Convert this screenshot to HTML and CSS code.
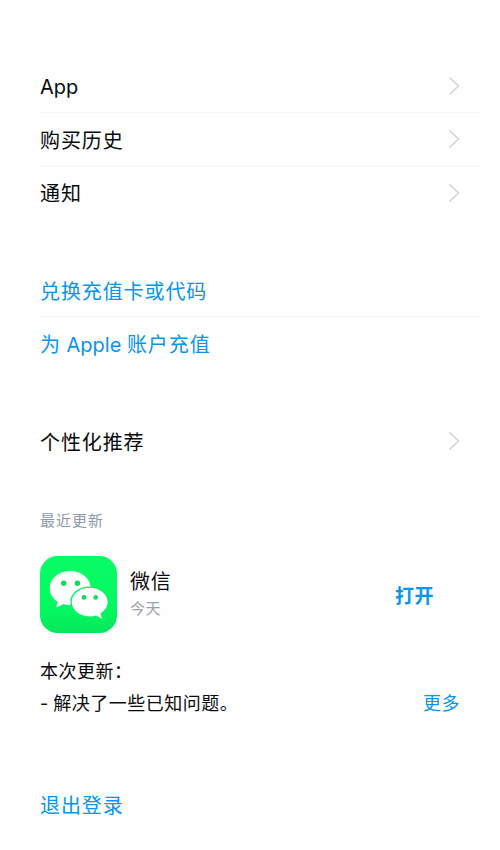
FILE: index.html
```
<!DOCTYPE html>
<html lang="zh-CN">
<head>
<meta charset="utf-8">
<title>账户</title>
<link rel="stylesheet" href="styles.css">
</head>
<body>
<main class="page">
  <section class="group">
    <div class="row"><span class="latin">App</span><svg class="chevron" viewBox="0 0 12 20"><path d="M1.500 1.500 10.500 10 1.500 18.500"/></svg></div>
    <div class="row"><span>购买历史</span><svg class="chevron" viewBox="0 0 12 20"><path d="M1.500 1.500 10.500 10 1.500 18.500"/></svg></div>
    <div class="row"><span>通知</span><svg class="chevron" viewBox="0 0 12 20"><path d="M1.500 1.500 10.500 10 1.500 18.500"/></svg></div>
  </section>
  <section class="group links">
    <div class="row"><span>兑换充值卡或代码</span></div>
    <div class="row"><span>为<span class="latin"> Apple </span>账户充值</span></div>
  </section>
  <section class="group">
    <div class="row"><span>个性化推荐</span><svg class="chevron" viewBox="0 0 12 20"><path d="M1.500 1.500 10.500 10 1.500 18.500"/></svg></div>
  </section>
  <h2 class="heading">最近更新</h2>
  <section class="app">
    <svg class="icon" viewBox="0 0 77 77">
      <defs><linearGradient id="green" x1="0" y1="0" x2="0" y2="1"><stop offset="0" stop-color="#08fc65"/><stop offset=".7" stop-color="#04f860"/><stop offset="1" stop-color="#08e65a"/></linearGradient></defs>
      <rect width="77" height="77" rx="17.5" fill="url(#green)"/>
      <path fill="#fff" d="M30.200 15C18.700 15 9.700 22.500 9.700 32.200c0 5.600 3 10.200 7.900 13.400L16.400 51.500l6.900-3.500c2.200.8 4.500 1.200 6.900 1.200 11.500 0 20.500-7.400 20.500-17S41.700 15 30.200 15z"/>
      <path fill="#fff" stroke="#04f660" stroke-width="2.800" paint-order="stroke" d="M49.700 31.800c-10 0-18 6.300-18 14.300s8 14.300 18 14.300c2.200 0 4.300-.3 6.200-.9l5.900 3.200-1.300-5.400c4.400-2.600 7.200-6.600 7.200-11.200 0-8-8-14.300-18-14.300z"/>
      <g fill="#08de5a"><circle cx="23.700" cy="27.300" r="2.700"/><circle cx="37.400" cy="27.300" r="2.700"/><circle cx="44" cy="41.400" r="2.300"/><circle cx="55.700" cy="41.400" r="2.300"/></g>
    </svg>
    <div class="info"><div class="name">微信</div><div class="date">今天</div></div>
    <div class="open">打开</div>
  </section>
  <section class="notes">
    <div class="line"><span>本次更新：</span></div>
    <div class="line"><span><span class="latin">- </span>解决了一些已知问题。</span><span class="more">更多</span></div>
  </section>
  <div class="row logout">退出登录</div>
</main>
</body>
</html>
```
FILE: styles.css
```
* { box-sizing: border-box; }
body {
  margin: 0;
  background: #fefefe;
  color: #080a0c;
  font-family: Inter, "Noto Sans CJK SC", sans-serif;
}
.page { height: 850px; padding: 59px 20px 0 40px; overflow: hidden; }
.group { margin-bottom: 44.2px; }
.row {
  display: flex;
  align-items: center;
  justify-content: space-between;
  height: 53.3px;
  padding-right: 20px;
  font-size: 20px;
  letter-spacing: .9px;
  line-height: 30px;
  white-space: nowrap;
}
.row > span { padding-top: 3px; }
.row > .latin { padding-top: 2px; }
.links .row:first-child > span, .row:only-child > span { padding-top: 4px; }
.row .latin, .line .latin { letter-spacing: 0; }
.row + .row { border-top: 1px solid #f4f5f6; }
.links, .logout { color: #0795f0; }
.chevron {
  width: 12px;
  height: 20px;
  fill: none;
  stroke: #cfd2d7;
  stroke-width: 1.5;
}
.heading {
  margin: -1px 0 0;
  color: #8d9bad;
  font-size: 15px;
  font-weight: 400;
  letter-spacing: 1px;
  line-height: 22px;
}
.app { display: flex; align-items: center; height: 77px; margin-top: 24px; }
.icon { width: 77px; height: 77px; }
.info { flex: 1; margin-left: 13px; }
.name { font-size: 20px; letter-spacing: .8px; line-height: 28px; }
.date { color: #9aa1ac; font-size: 15px; letter-spacing: .6px; line-height: 25px; }
.open {
  margin-right: 46px;
  color: #0795f0;
  font-size: 19px;
  font-weight: 700;
  letter-spacing: .5px;
}
.notes { margin-top: 23px; font-size: 18px; letter-spacing: .5px; line-height: 32px; }
.line { display: flex; justify-content: space-between; padding-right: 20px; white-space: nowrap; }
.more { color: #0795f0; }
.logout { margin-top: 59.5px; }
```
